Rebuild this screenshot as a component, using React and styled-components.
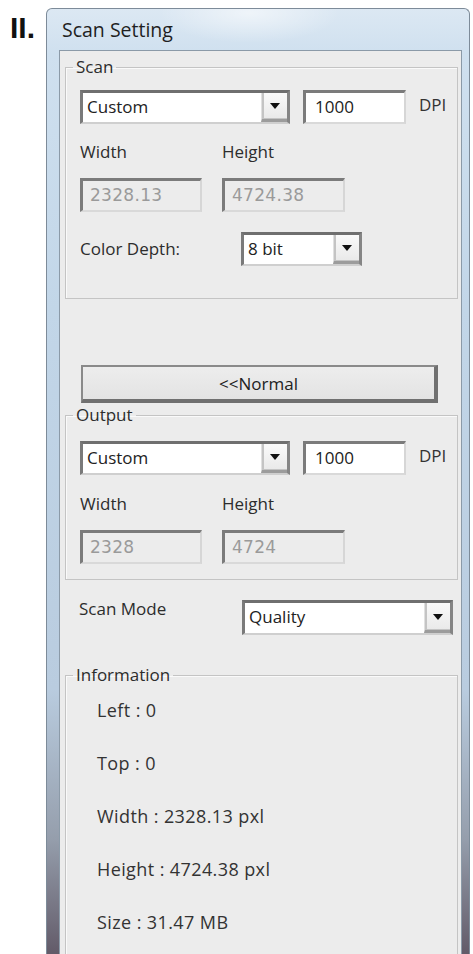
import React from 'react';
import styled, { createGlobalStyle } from 'styled-components';

const GlobalStyle = createGlobalStyle`
  html, body {
    margin: 0;
    padding: 0;
    background: #ffffff;
  }
  body {
    font-family: "Open Sans", "Noto Sans", sans-serif;
    color: #2d2d2d;
  }
`;

const Page = styled.div`
  display: flex;
  align-items: flex-start;
  height: 954px;
  overflow: hidden;
`;

const Marker = styled.div`
  width: 46px;
  padding: 12px 0 0 10px;
  box-sizing: border-box;
  font-family: "Liberation Sans", Arial, sans-serif;
  font-weight: bold;
  font-size: 30px;
  line-height: 32px;
  color: #111;
`;

const Window = styled.div`
  margin-top: 8px;
  width: 424px;
  height: 946px;
  box-sizing: border-box;
  display: flex;
  flex-direction: column;
  border: 1px solid #7d8b99;
  border-bottom: none;
  border-radius: 6px 6px 0 0;
  background: linear-gradient(
    to bottom,
    #dce8f3 0px,
    #cfe0ef 45px,
    #c2d6e8 300px,
    #b9ccdf 680px,
    #959eac 830px,
    #625a68 946px
  );
`;

const TitleBar = styled.div`
  height: 41px;
  padding-left: 15px;
  display: flex;
  align-items: center;
  font-size: 19.5px;
  color: #1f1f1f;
  background: radial-gradient(ellipse 90px 30px at 48% 10%, rgba(255, 255, 255, 0.55), transparent);
`;

const Client = styled.div`
  flex: 1;
  margin: 0 7px 0 12px;
  background: #ececec;
  border: 1px solid #8b9aa8;
  border-bottom: none;
  padding: 5px 3px 0 5px;
  display: flex;
  flex-direction: column;
`;

const Group = styled.fieldset`
  margin: ${(p) => p.$mt || 0}px 0 0 0;
  padding: 0 0 ${(p) => p.$pb || 0}px 14px;
  border: 1px solid #c4c4c4;
  box-shadow: inset 1px 1px 0 #fafafa;
  min-width: 0;
  ${(p) => p.$open && 'flex: 1; border-bottom: none;'}
`;

const Legend = styled.legend`
  margin-left: -7px;
  padding: 0 3px;
  font-size: 17px;
  line-height: 22px;
  color: #2d2d2d;
`;

const Row = styled.div`
  display: flex;
  align-items: ${(p) => p.$align || 'flex-start'};
  gap: ${(p) => p.$gap || 0}px;
  margin-top: ${(p) => p.$mt || 0}px;
  padding-left: ${(p) => p.$pl || 0}px;
`;

const Label = styled.div`
  font-size: 17px;
  line-height: 22px;
  width: ${(p) => (p.$w ? `${p.$w}px` : 'auto')};
  flex-shrink: 0;
  margin-top: ${(p) => p.$mt || 0}px;
`;

const SelectBox = styled.div`
  width: ${(p) => p.$w}px;
  height: ${(p) => p.$h || 34}px;
  box-sizing: border-box;
  display: flex;
  background: #fff;
  border-top: 3px solid #6f6f6f;
  border-left: 3px solid #7a7a7a;
  border-right: 3px solid #858585;
  border-bottom: 2px solid #cfcfcf;
`;

const SelectValue = styled.div`
  flex: 1;
  padding-left: 4px;
  font-size: 17px;
  line-height: 28px;
  color: #222;
`;

const ArrowButton = styled.div`
  width: 25px;
  display: flex;
  align-items: center;
  justify-content: center;
  background: linear-gradient(to bottom, #fafafa, #e9e9e9);
  border-left: 1px solid #e0e0e0;
  border-bottom: 3px solid #9c9c9c;
  box-shadow: inset 2px -1px 0 #c4c4c4;
`;

const Arrow = styled.span`
  width: 0;
  height: 0;
  border-left: 5px solid transparent;
  border-right: 5px solid transparent;
  border-top: 6px solid #111;
`;

const TextBox = styled.div`
  width: ${(p) => p.$w}px;
  height: 34px;
  box-sizing: border-box;
  padding-left: ${(p) => (p.$disabled ? 7 : 9)}px;
  background: ${(p) => (p.$disabled ? '#ececec' : '#fff')};
  border-top: 3px solid #7b7b7b;
  border-left: 3px solid #7b7b7b;
  border-right: 2px solid #d6d6d6;
  border-bottom: 2px solid #d9d9d9;
  font-family: ${(p) => (p.$disabled ? '"DejaVu Sans", sans-serif' : '"Open Sans", sans-serif')};
  font-size: ${(p) => (p.$disabled ? 17 : 17)}px;
  letter-spacing: ${(p) => (p.$disabled ? 0.3 : 0)}px;
  line-height: 28px;
  color: ${(p) => (p.$disabled ? '#9a9a9a' : '#222')};
`;

const Unit = styled.div`
  font-size: 17px;
  line-height: 22px;
  margin-top: 4px;
  color: #333;
`;

const NormalButton = styled.button`
  margin: 66px 0 0 16px;
  width: 357px;
  height: 38px;
  box-sizing: border-box;
  font-family: "Open Sans", sans-serif;
  font-size: 17px;
  color: #222;
  background: linear-gradient(to bottom, #ededed, #e3e3e3);
  border-top: 2px solid #8a8a8a;
  border-left: 2px solid #8a8a8a;
  border-right: 4px solid #707070;
  border-bottom: 4px solid #707070;
  padding: 0;
`;

const InfoList = styled.div`
  display: flex;
  flex-direction: column;
  gap: 31px;
  margin-top: 13px;
  padding-left: 17px;
`;

const InfoItem = styled.div`
  font-size: 18px;
  line-height: 22px;
  letter-spacing: 0.4px;
  color: #333;
`;

const Select = ({ w, h, value }) => (
  <SelectBox $w={w} $h={h}>
    <SelectValue>{value}</SelectValue>
    <ArrowButton>
      <Arrow />
    </ArrowButton>
  </SelectBox>
);

const SizeFields = ({ width, height, mt }) => (
  <>
    <Row $gap={20} $mt={mt}>
      <Label $w={122}>Width</Label>
      <Label>Height</Label>
    </Row>
    <Row $gap={20} $mt={15}>
      <TextBox $w={122} $disabled>{width}</TextBox>
      <TextBox $w={123} $disabled>{height}</TextBox>
    </Row>
  </>
);

const DpiRow = ({ mt }) => (
  <Row $gap={13} $mt={mt}>
    <Select w={210} value="Custom" />
    <TextBox $w={103}>1000</TextBox>
    <Unit>DPI</Unit>
  </Row>
);

export default function App() {
  return (
    <>
      <GlobalStyle />
      <Page>
        <Marker>II.</Marker>
        <Window>
          <TitleBar>Scan Setting</TitleBar>
          <Client>
            <Group $pb={32}>
              <Legend>Scan</Legend>
              <DpiRow mt={12} />
              <SizeFields width="2328.13" height="4724.38" mt={17} />
              <Row $align="center" $mt={20}>
                <Label $w={161}>Color Depth:</Label>
                <Select w={121} value="8 bit" />
              </Row>
            </Group>
            <NormalButton>&lt;&lt;Normal</NormalButton>
            <Group $mt={1} $pb={15}>
              <Legend>Output</Legend>
              <DpiRow mt={15} />
              <SizeFields width="2328" height="4724" mt={18} />
            </Group>
            <Row $mt={20} $pl={14}>
              <Label $w={163} $mt={-2}>Scan Mode</Label>
              <Select w={211} h={35} value="Quality" />
            </Row>
            <Group $mt={29} $open>
              <Legend>Information</Legend>
              <InfoList>
                <InfoItem>Left : 0</InfoItem>
                <InfoItem>Top : 0</InfoItem>
                <InfoItem>Width : 2328.13 pxl</InfoItem>
                <InfoItem>Height : 4724.38 pxl</InfoItem>
                <InfoItem>Size : 31.47 MB</InfoItem>
              </InfoList>
            </Group>
          </Client>
        </Window>
      </Page>
    </>
  );
}
